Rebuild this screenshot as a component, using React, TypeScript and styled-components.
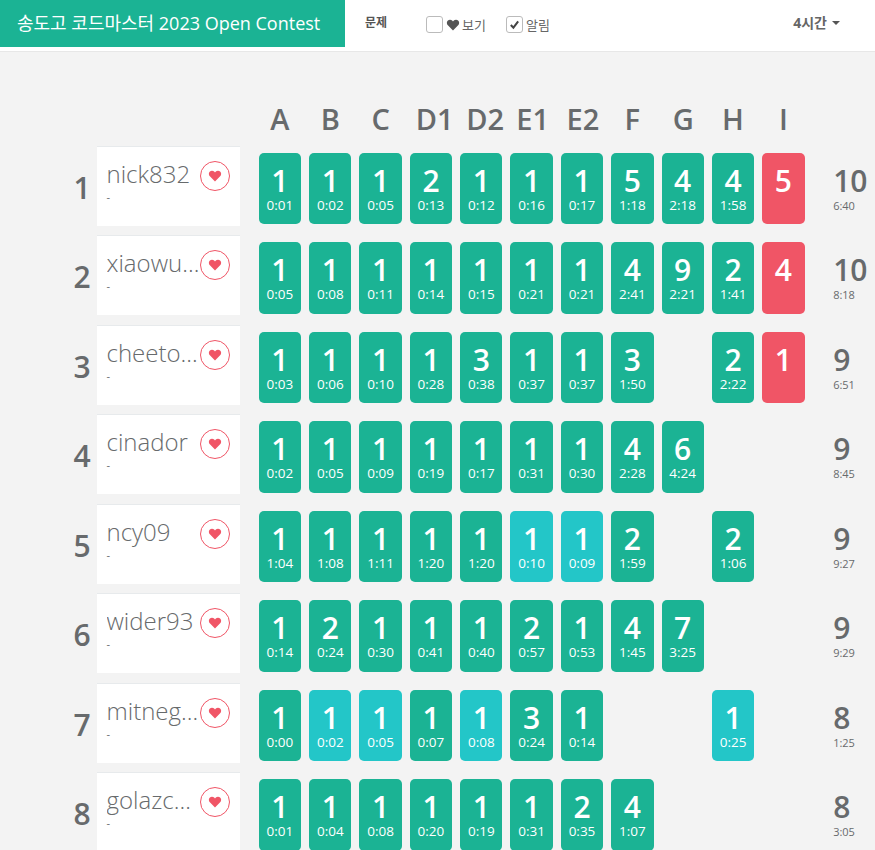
import React from "react";
import styled, { createGlobalStyle } from "styled-components";

const Global = createGlobalStyle`
  html, body { margin: 0; padding: 0; background: #f3f3f3; overflow: hidden; }
  body { font-family: "Open Sans", "Noto Sans CJK KR", sans-serif; color: #666a6d; }
  * { box-sizing: border-box; }
`;

const Page = styled.div`
  width: 875px;
  height: 850px;
  overflow: hidden;
`;

const NavBar = styled.header`
  height: 52px;
  background: #fff;
  border-bottom: 1px solid #e7e7e7;
  display: flex;
  align-items: flex-start;
`;

const Brand = styled.div`
  width: 345px;
  height: 47px;
  background: #1bb394;
  color: #fff;
  font-size: 18px;
  font-weight: 400;
  line-height: 46px;
  padding-left: 17px;
  white-space: nowrap;
`;

const NavLink = styled.div`
  margin-left: 20px;
  width: 61px;
  font-size: 12px;
  font-weight: 700;
  line-height: 45px;
  color: #555;
`;

const Check = styled.span`
  width: 17px;
  height: 17px;
  border: 1px solid #bbb;
  border-radius: 3px;
  background: #fff;
  display: inline-flex;
  align-items: center;
  justify-content: center;
  flex: none;
  margin-right: 1px;
`;

const Toggle = styled.label`
  display: flex;
  align-items: center;
  height: 17px;
  margin-top: 16px;
  margin-right: 20px;
  gap: 2px;
  font-size: 13px;
  color: #666;
`;

const TimeMenu = styled.div`
  margin-left: auto;
  margin-right: 35px;
  font-size: 14px;
  font-weight: 700;
  line-height: 45px;
  color: #666;
  display: flex;
  align-items: center;
  gap: 5px;
`;

const Caret = styled.i`
  width: 0;
  height: 0;
  border-left: 4px solid transparent;
  border-right: 4px solid transparent;
  border-top: 4px solid #555;
`;

const Board = styled.main`
  padding-top: 43.9px;
`;

const HeadRow = styled.div`
  display: grid;
  grid-template-columns: repeat(11, 42.35px);
  column-gap: 8px;
  padding-left: 258.75px;
  height: 50px;
  padding-bottom: 3px;
  align-items: center;
`;

const HeadCell = styled.div<{ $nudge: number }>`
  text-align: center;
  font-size: 29px;
  font-weight: 600;
  line-height: 38px;
  white-space: nowrap;
  color: #676a6c;
  padding-left: ${(p) => p.$nudge}px;
`;

const Row = styled.section`
  display: flex;
  height: 89.5px;
  align-items: flex-start;
`;

const Rank = styled.div`
  width: 97px;
  height: 80px;
  padding-left: 67px;
  text-align: center;
  font-size: 30px;
  font-weight: 600;
  line-height: 83px;
  color: #676a6c;
`;

const NameCard = styled.div`
  position: relative;
  width: 143px;
  height: 80px;
  background: #fff;
  border-top: 1px solid #e7eaec;
  padding: 11px 0 0 9.5px;
`;

const Name = styled.div`
  width: 93px;
  font-size: 24px;
  font-weight: 300;
  line-height: 32px;
  color: #676a6c;
  overflow: hidden;
  white-space: nowrap;
  text-overflow: ellipsis;
`;

const Sub = styled.div`
  font-size: 11px;
  line-height: 12px;
  margin-top: 1px;
  color: #676a6c;
`;

const HeartButton = styled.span`
  position: absolute;
  top: 14px;
  right: 10px;
  width: 30px;
  height: 30px;
  border: 1px solid #f05566;
  border-radius: 50%;
  display: flex;
  align-items: center;
  justify-content: center;
`;

const Cells = styled.div`
  display: grid;
  grid-template-columns: repeat(11, 42.35px);
  column-gap: 8px;
  margin-left: 18.75px;
  padding-top: 7px;
`;

const Cell = styled.div<{ $kind: string }>`
  height: 71.5px;
  border-radius: 5px;
  color: #fff;
  text-align: center;
  background: ${(p) =>
    p.$kind === "f" ? "#23c6c8" : p.$kind === "x" ? "#f05566" : p.$kind === "" ? "transparent" : "#1bb394"};
`;

const Tries = styled.div`
  font-size: 30px;
  font-weight: 600;
  line-height: 30px;
  padding-top: 13px;
`;

const Time = styled.div`
  font-size: 13.5px;
  line-height: 15px;
  margin-top: 2px;
`;

const Total = styled.div`
  margin-left: 28.6px;
  width: 40px;
  padding-top: 17px;
  color: #676a6c;
`;

const Solved = styled.div`
  font-size: 30px;
  font-weight: 600;
  line-height: 36px;
  white-space: nowrap;
`;

const Penalty = styled.div`
  font-size: 11px;
  line-height: 14px;
`;

const Heart = ({ size, color }: { size: number; color: string }) => (
  <svg width={size} height={size} viewBox="0 0 24 24" fill={color}>
    <path d="M12 21.5 3.2 12.6C.8 10.1.9 6.2 3.3 4.2c2.3-1.9 5.800-1.500 7.700.6l1 1.100 1-1.100c1.900-2.100 5.400-2.500 7.700-.6 2.400 2 2.500 5.900.1 8.400z" />
  </svg>
);

const columns = ["A", "B", "C", "D1", "D2", "E1", "E2", "F", "G", "H", "I"];
const nudges: Record<string, number> = { D1: 6, D2: 6, E1: 2, E2: 2, G: 1 };

type C = string;
const rows: { name: string; solved: string; pen: string; cells: C[] }[] = [
  { name: "nick832", solved: "10", pen: "6:40", cells: ["1 0:01", "1 0:02", "1 0:05", "2 0:13", "1 0:12", "1 0:16", "1 0:17", "5 1:18", "4 2:18", "4 1:58", "x5"] },
  { name: "xiaowuc1", solved: "10", pen: "8:18", cells: ["1 0:05", "1 0:08", "1 0:11", "1 0:14", "1 0:15", "1 0:21", "1 0:21", "4 2:41", "9 2:21", "2 1:41", "x4"] },
  { name: "cheetose", solved: "9", pen: "6:51", cells: ["1 0:03", "1 0:06", "1 0:10", "1 0:28", "3 0:38", "1 0:37", "1 0:37", "3 1:50", "", "2 2:22", "x1"] },
  { name: "cinador", solved: "9", pen: "8:45", cells: ["1 0:02", "1 0:05", "1 0:09", "1 0:19", "1 0:17", "1 0:31", "1 0:30", "4 2:28", "6 4:24", "", ""] },
  { name: "ncy09", solved: "9", pen: "9:27", cells: ["1 1:04", "1 1:08", "1 1:11", "1 1:20", "1 1:20", "f1 0:10", "f1 0:09", "2 1:59", "", "2 1:06", ""] },
  { name: "wider93", solved: "9", pen: "9:29", cells: ["1 0:14", "2 0:24", "1 0:30", "1 0:41", "1 0:40", "2 0:57", "1 0:53", "4 1:45", "7 3:25", "", ""] },
  { name: "mitneggs", solved: "8", pen: "1:25", cells: ["1 0:00", "f1 0:02", "f1 0:05", "1 0:07", "f1 0:08", "3 0:24", "1 0:14", "", "", "f1 0:25", ""] },
  { name: "golazcc83", solved: "8", pen: "3:05", cells: ["1 0:01", "1 0:04", "1 0:08", "1 0:20", "1 0:19", "1 0:31", "2 0:35", "4 1:07", "", "", ""] },
];

const parse = (c: string) => {
  if (!c) return { kind: "", tries: "", time: "" };
  const kind = c[0] === "f" || c[0] === "x" ? c[0] : "a";
  const [tries, time] = c.replace(/^[fx]/, "").split(" ");
  return { kind, tries, time: time || "" };
};

export default function App() {
  return (
    <Page>
      <Global />
      <NavBar>
        <Brand>송도고 코드마스터 2023 Open Contest</Brand>
        <NavLink>문제</NavLink>
        <Toggle>
          <Check />
          <Heart size={14} color="#555" />
          보기
        </Toggle>
        <Toggle>
          <Check>
            <svg width="11" height="11" viewBox="0 0 12 12" fill="none" stroke="#444" strokeWidth="2.2">
              <path d="M2 6.500 4.800 9.500 10 2.500" />
            </svg>
          </Check>
          알림
        </Toggle>
        <TimeMenu>
          4시간
          <Caret />
        </TimeMenu>
      </NavBar>
      <Board>
        <HeadRow>
          {columns.map((c) => (
            <HeadCell key={c} $nudge={nudges[c] || 0}>
              {c}
            </HeadCell>
          ))}
        </HeadRow>
        {rows.map((r, i) => (
          <Row key={r.name}>
            <Rank>{i + 1}</Rank>
            <NameCard>
              <Name>{r.name}</Name>
              <Sub>-</Sub>
              <HeartButton>
                <Heart size={14} color="#f05566" />
              </HeartButton>
            </NameCard>
            <Cells>
              {r.cells.map((c, j) => {
                const p = parse(c);
                return (
                  <Cell key={j} $kind={p.kind}>
                    {p.tries && <Tries>{p.tries}</Tries>}
                    {p.time && <Time>{p.time}</Time>}
                  </Cell>
                );
              })}
            </Cells>
            <Total>
              <Solved>{r.solved}</Solved>
              <Penalty>{r.pen}</Penalty>
            </Total>
          </Row>
        ))}
      </Board>
    </Page>
  );
}
